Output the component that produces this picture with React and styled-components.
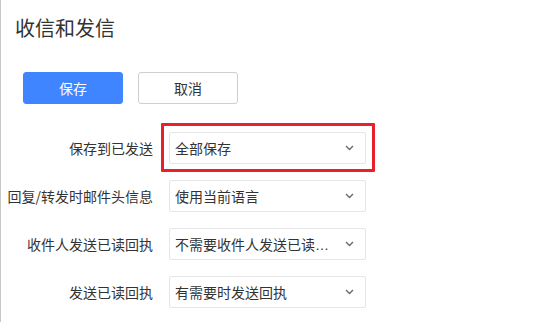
import React from "react";
import styled, { createGlobalStyle } from "styled-components";

const GlobalStyle = createGlobalStyle`
  html, body {
    margin: 0;
    padding: 0;
    background: #fff;
  }
  body {
    font-family: "Noto Sans CJK SC", "Liberation Sans", sans-serif;
    color: #333;
  }
`;

const rows = [
  { label: "保存到已发送", value: "全部保存", highlight: true },
  { label: "回复/转发时邮件头信息", value: "使用当前语言" },
  { label: "收件人发送已读回执", value: "不需要收件人发送已读回执" },
  { label: "发送已读回执", value: "有需要时发送回执" },
];

function Chevron() {
  return (
    <svg width="9" height="6" viewBox="0 0 9 6">
      <polyline
        points="1,1 4.5,4.5 8,1"
        fill="none"
        stroke="#666"
        strokeWidth="1.3"
      />
    </svg>
  );
}

export default function App() {
  return (
    <Page>
      <GlobalStyle />
      <Title>收信和发信</Title>
      <Actions>
        <Button primary>保存</Button>
        <Button>取消</Button>
      </Actions>
      <Form>
        {rows.map((row) => (
          <Row key={row.label}>
            <Label>{row.label}</Label>
            <Select highlight={row.highlight}>
              <SelectText title={row.value}>{row.value}</SelectText>
              <Chevron />
            </Select>
          </Row>
        ))}
      </Form>
    </Page>
  );
}

const Page = styled.div`
  box-sizing: border-box;
  min-height: 322px;
  border-left: 1px solid #c8c8c8;
  padding-top: 14px;
`;

const Title = styled.h1`
  margin: 0 0 30px 14px;
  font-size: 20px;
  font-weight: 400;
  line-height: 28px;
  color: #333;
`;

const Actions = styled.div`
  display: flex;
  gap: 15px;
  padding-left: 22px;
`;

const Button = styled.button`
  box-sizing: border-box;
  width: 100px;
  height: 32px;
  border-radius: 3px;
  font-family: inherit;
  font-size: 14px;
  cursor: pointer;
  background: ${(p) => (p.primary ? "#3f85ff" : "#fff")};
  color: ${(p) => (p.primary ? "#fff" : "#333")};
  border: 1px solid ${(p) => (p.primary ? "#3f85ff" : "#cfcfcf")};
`;

const Form = styled.div`
  display: flex;
  flex-direction: column;
  gap: 16px;
  margin-top: 28px;
`;

const Row = styled.div`
  display: grid;
  grid-template-columns: 152px 197px;
  column-gap: 16px;
  align-items: center;
`;

const Label = styled.div`
  text-align: right;
  font-size: 14px;
  white-space: nowrap;
  color: #333;
`;

const Select = styled.div`
  position: relative;
  box-sizing: border-box;
  height: 32px;
  display: flex;
  align-items: center;
  justify-content: space-between;
  padding: 0 11px 0 5px;
  border: 1px solid #e6e6e6;
  border-radius: 2px;
  background: #fff;

  ${(p) =>
    p.highlight &&
    `
    &::after {
      content: "";
      position: absolute;
      left: -9px;
      right: -10px;
      top: -10px;
      bottom: -9px;
      border: 3px solid #e8202a;
      border-radius: 1px;
      pointer-events: none;
    }
  `}
`;

const SelectText = styled.span`
  width: 160px;
  font-family: "Liberation Sans", "Noto Sans CJK SC", sans-serif;
  font-size: 14px;
  color: #333;
  white-space: nowrap;
  overflow: hidden;
  text-overflow: ellipsis;
`;
